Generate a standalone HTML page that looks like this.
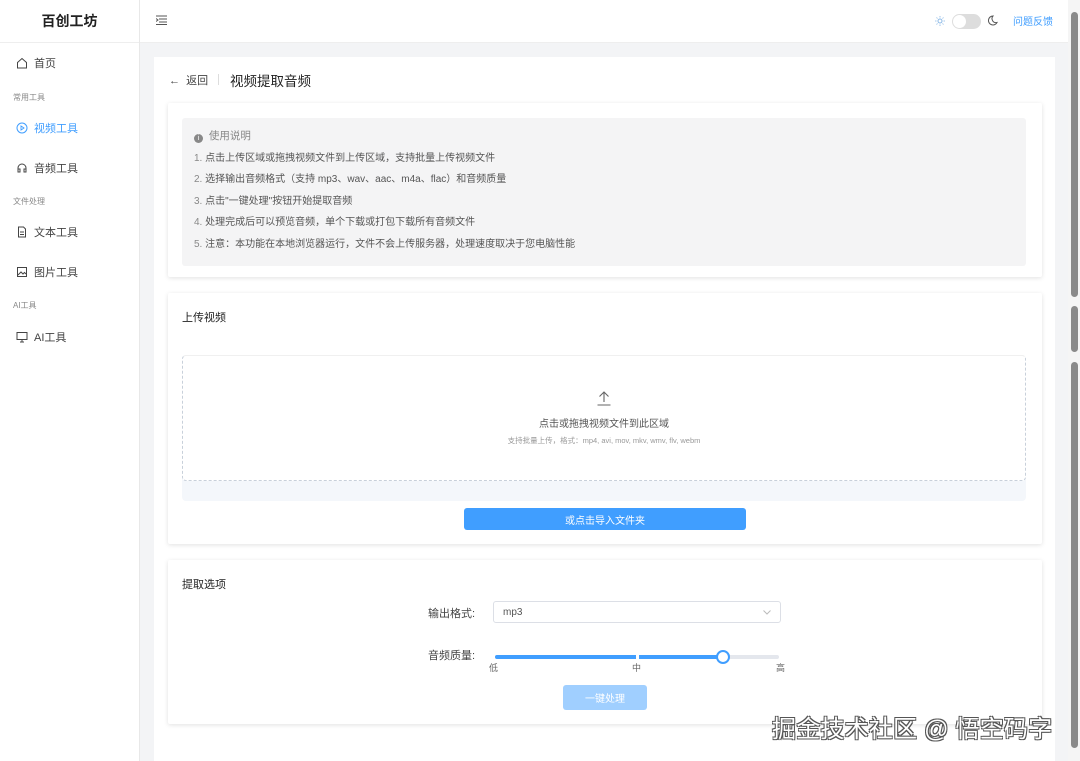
<!DOCTYPE html>
<html><head><meta charset="utf-8">
<style>
*{box-sizing:border-box;margin:0;padding:0}
body{width:1080px;height:761px;overflow:hidden;font-family:"Liberation Sans","Noto Sans CJK SC",sans-serif;background:#f3f4f6;position:relative;color:#333}
.side{position:absolute;left:0;top:0;width:140px;height:761px;background:#fff;border-right:1px solid #e8e8e8}
.logo{height:43px;border-bottom:1px solid #eee;text-align:center;line-height:43px;font-weight:bold;font-size:14px;color:#222}
.it{position:absolute;left:16px;font-size:11px;color:#444;display:flex;align-items:center;gap:6px}
.grp{position:absolute;left:13px;font-size:8px;color:#888}
.hdr{position:absolute;left:140px;top:0;right:0;height:43px;background:#fff;border-bottom:1px solid #eee}
.main{position:absolute;left:154px;top:57px;width:901px;height:704px;background:#fff}
.card{position:absolute;left:14px;width:874px;background:#fff;box-shadow:0 1px 5px rgba(0,0,0,.12);border-radius:2px}
.sb{position:absolute;left:1071px;width:7px;background:#8a8a8a;border-radius:4px}
.btn{display:flex;align-items:center;justify-content:center}
</style></head><body>
<div class="side">
 <div class="logo">百创工坊</div>
 <div class="it" style="top:55px"><svg width="12" height="12" viewBox="0 0 12 12"><path d="M1.5 5.5L6 1.5l4.5 4V11h-9z" fill="none" stroke="#444" stroke-width="1"/></svg>首页</div>
 <div class="grp" style="top:92px">常用工具</div>
 <div class="it" style="top:120px;color:#409eff"><svg width="12" height="12" viewBox="0 0 12 12"><circle cx="6" cy="6" r="5" fill="none" stroke="#409eff"/><path d="M5 4v4l3-2z" fill="none" stroke="#409eff" stroke-width=".9"/></svg>视频工具</div>
 <div class="it" style="top:160px"><svg width="12" height="12" viewBox="0 0 12 12"><path d="M2 9V6a4 4 0 018 0v3M2 7h2v3H2zM8 7h2v3H8z" fill="none" stroke="#444"/></svg>音频工具</div>
 <div class="grp" style="top:196px">文件处理</div>
 <div class="it" style="top:224px"><svg width="12" height="12" viewBox="0 0 12 12"><path d="M2.5 1h5l2 2v8h-7zM4 6h4M4 8.5h4" fill="none" stroke="#444"/></svg>文本工具</div>
 <div class="it" style="top:264px"><svg width="12" height="12" viewBox="0 0 12 12"><rect x="1.5" y="1.5" width="9" height="9" fill="none" stroke="#444"/><path d="M2 9l3-3 2 2 1.5-1.5L10 8" fill="none" stroke="#444"/></svg>图片工具</div>
 <div class="grp" style="top:300px">AI工具</div>
 <div class="it" style="top:329px"><svg width="12" height="12" viewBox="0 0 12 12"><rect x="1" y="1.5" width="10" height="7" fill="none" stroke="#444"/><path d="M4 11h4M6 8.5V11" stroke="#444"/></svg>AI工具</div>
</div>
<div class="hdr">
 <svg style="position:absolute;left:16px;top:15px" width="11" height="10" viewBox="0 0 11 10"><path d="M0 1h11M3 4h8M3 7h8M0 9.5h11M0 3.5l2 1.5-2 1.5" fill="none" stroke="#555"/></svg>
 <svg style="position:absolute;left:795px;top:16px" width="10" height="10" viewBox="0 0 10 10"><circle cx="5" cy="5" r="2" fill="none" stroke="#8ab8e6"/><path d="M5 0v1.5M5 8.5V10M0 5h1.5M8.5 5H10M1.5 1.5l1 1M7.5 7.5l1 1M1.5 8.5l1-1M7.5 2.5l1-1" stroke="#8ab8e6" stroke-width=".8"/></svg>
 <div style="position:absolute;left:812px;top:14px;width:29px;height:15px;border-radius:8px;background:#ddd"><div style="position:absolute;left:1px;top:1px;width:13px;height:13px;border-radius:50%;background:#fff"></div></div>
 <svg style="position:absolute;left:848px;top:15px" width="10" height="11" viewBox="0 0 10 11"><path d="M5 1a4.5 4.5 0 104 6.5A4 4 0 015 1z" fill="none" stroke="#555"/></svg>
 <span style="position:absolute;left:873px;top:13px;color:#409eff;font-size:10px">问题反馈</span>
</div>
<div class="main">
 <div style="position:absolute;left:15px;top:15px;font-size:11px;color:#444">←&nbsp; 返回</div>
 <div style="position:absolute;left:64px;top:17px;width:1px;height:11px;background:#ddd"></div>
 <div style="position:absolute;left:76px;top:13px;font-size:13.5px;color:#222">视频提取音频</div>
 <div class="card" style="top:46px;height:174px">
  <div style="position:absolute;left:14px;top:15px;width:844px;height:148px;background:#f4f4f5;border-radius:3px;font-size:10px;color:#555;line-height:21.5px;padding:8px 0 0 12px">
   <div style="color:#888;font-size:10.5px"><span style="display:inline-block;width:9px;height:9px;border-radius:50%;background:#888;color:#fff;font-size:7px;line-height:9px;text-align:center;vertical-align:-1px">i</span>&nbsp; 使用说明</div>
   <div><span style="color:#888">1.</span> 点击上传区域或拖拽视频文件到上传区域，支持批量上传视频文件</div>
   <div><span style="color:#888">2.</span> 选择输出音频格式（支持 mp3、wav、aac、m4a、flac）和音频质量</div>
   <div><span style="color:#888">3.</span> 点击"一键处理"按钮开始提取音频</div>
   <div><span style="color:#888">4.</span> 处理完成后可以预览音频，单个下载或打包下载所有音频文件</div>
   <div><span style="color:#888">5.</span> 注意：本功能在本地浏览器运行，文件不会上传服务器，处理速度取决于您电脑性能</div>
  </div>
 </div>
 <div class="card" style="top:236px;height:251px">
  <div style="position:absolute;left:14px;top:16px;font-size:11px;color:#222">上传视频</div>
  <div style="position:absolute;left:14px;top:62px;width:844px;height:146px;background:#f4f7fb;border-radius:4px"></div>
  <div style="position:absolute;left:14px;top:62px;width:844px;height:126px;background:#fff;border:1px dashed #c8d0da;border-top:1px solid #f0f0f0;border-radius:4px;text-align:center">
   <svg style="margin-top:34px" width="16" height="16" viewBox="0 0 16 16"><path d="M8 12V2M3.5 6.5L8 2l4.5 4.5M1.5 15h13" fill="none" stroke="#666" stroke-width="1.1"/></svg>
   <div style="font-size:10px;color:#555;margin-top:4px">点击或拖拽视频文件到此区域</div>
   <div style="font-size:7.5px;color:#999;margin-top:5px">支持批量上传，格式：mp4, avi, mov, mkv, wmv, flv, webm</div>
  </div>
  <div class="btn" style="position:absolute;left:296px;top:215px;width:282px;height:22px;background:#409eff;border-radius:3px;color:#fff;font-size:10px">或点击导入文件夹</div>
 </div>
 <div class="card" style="top:503px;height:164px">
  <div style="position:absolute;left:14px;top:16px;font-size:11px;color:#222">提取选项</div>
  <div style="position:absolute;left:260px;top:45px;font-size:11px;color:#444">输出格式:</div>
  <div style="position:absolute;left:325px;top:41px;width:288px;height:22px;border:1px solid #dcdfe6;border-radius:3px;font-size:10px;color:#555;display:flex;align-items:center;padding-left:9px">mp3<svg style="position:absolute;right:9px;top:8px" width="8" height="5" viewBox="0 0 8 5"><path d="M0.5 0.5L4 4l3.5-3.5" fill="none" stroke="#bbb"/></svg></div>
  <div style="position:absolute;left:260px;top:87px;font-size:11px;color:#444">音频质量:</div>
  <div style="position:absolute;left:327px;top:95px;width:284px;height:4px;background:#e4e7ed;border-radius:2px"></div>
  <div style="position:absolute;left:327px;top:95px;width:228px;height:4px;background:#409eff;border-radius:2px"></div>
  <div style="position:absolute;left:468px;top:95px;width:3px;height:4px;background:#fff"></div>
  <div style="position:absolute;left:548px;top:90px;width:14px;height:14px;border-radius:50%;background:#fff;border:2px solid #409eff"></div>
  <div style="position:absolute;left:321px;top:101px;font-size:9px;color:#666">低</div>
  <div style="position:absolute;left:464px;top:101px;font-size:9px;color:#666">中</div>
  <div style="position:absolute;left:608px;top:101px;font-size:9px;color:#666">高</div>
  <div class="btn" style="position:absolute;left:395px;top:125px;width:84px;height:25px;background:#a0cfff;border-radius:3px;color:#fff;font-size:10px">一键处理</div>
 </div>
</div>
<div style="position:absolute;left:772px;top:709px;font-size:24px;color:#fff;letter-spacing:0.2px;text-shadow:1px 1px 0 #555,-1px -1px 0 #555,1px -1px 0 #555,-1px 1px 0 #555">掘金技术社区 @ 悟空码字</div>
<div style="position:absolute;left:1068px;top:0;width:12px;height:761px;background:#f5f5f5"></div>
<div class="sb" style="top:12px;height:285px"></div>
<div class="sb" style="top:306px;height:46px"></div>
<div class="sb" style="top:362px;height:386px"></div>
</body></html>
